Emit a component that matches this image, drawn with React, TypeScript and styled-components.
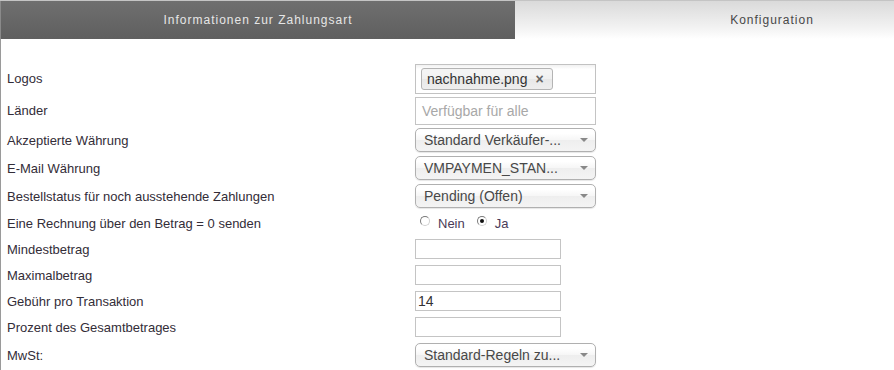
import React from 'react'
import styled, { createGlobalStyle } from 'styled-components'

const GlobalStyle = createGlobalStyle`
  html, body {
    margin: 0;
    padding: 0;
    background: #fff;
    overflow: hidden;
  }
  body {
    font-family: "Liberation Sans", Arial, sans-serif;
    color: #333;
  }
`

const Page = styled.div`
  width: 894px;
  height: 370px;
  overflow: hidden;
`

const TabBar = styled.div`
  display: flex;
  width: 1028px;
  height: 39px;
  box-sizing: border-box;
  border-top: 1px solid #c4c4c4;
`

const Tab = styled.div<{ $active?: boolean }>`
  flex: 0 0 514px;
  display: flex;
  align-items: center;
  justify-content: center;
  font-size: 12px;
  letter-spacing: 1px;
  color: ${({ $active }) => ($active ? '#e6e6e6' : '#484848')};
  background: ${({ $active }) =>
    $active
      ? 'linear-gradient(#6f6f6f, #5f5f5f)'
      : 'linear-gradient(#dadada, #f2f2f2 70%, #ffffff)'};
  border-left: ${({ $active }) => ($active ? '1px solid #8a8a8a' : 'none')};
`

const Panel = styled.div`
  border-left: 1px solid #9a9a9a;
  padding: 23px 0 0 6px;
  height: 331px;
  box-sizing: border-box;
`

const Row = styled.div<{ $h: number }>`
  display: grid;
  grid-template-columns: 408px auto;
  align-items: center;
  height: ${({ $h }) => $h}px;
`

const Label = styled.div`
  font-size: 13px;
  color: #332d38;
`

const Field = styled.div`
  display: flex;
  align-items: center;
`

const MultiBox = styled.div`
  width: 181px;
  height: 30px;
  box-sizing: border-box;
  border: 1px solid #c2c2c2;
  background: linear-gradient(#f2f2f2 1%, #ffffff 15%);
  display: flex;
  align-items: center;
  padding-left: 5px;
`

const Chip = styled.span`
  display: inline-flex;
  align-items: center;
  height: 22px;
  box-sizing: border-box;
  padding: 0 8px 0 5px;
  border: 1px solid #b4b4b4;
  border-radius: 3px;
  background: linear-gradient(#f4f4f4 20%, #f0f0f0 50%, #e8e8e8 52%, #eeeeee 100%);
  font-size: 14px;
  color: #333;
  gap: 8px;
`

const ChipClose = styled.span`
  font-size: 14px;
  font-weight: bold;
  color: #666;
  line-height: 1;
`

const TextBox = styled.div<{ $w: number; $h: number; $muted?: boolean }>`
  width: ${({ $w }) => $w}px;
  height: ${({ $h }) => $h}px;
  box-sizing: border-box;
  border: 1px solid #c4c4c4;
  background: #fff;
  display: flex;
  align-items: center;
  padding-left: 6px;
  font-size: 14px;
  color: ${({ $muted }) => ($muted ? '#a8a8a8' : '#333')};
`

const SmallInput = styled(TextBox)`
  padding-left: 2px;
`

const Select = styled.div`
  width: 181px;
  height: 24px;
  box-sizing: border-box;
  border: 1px solid #b0b0b0;
  border-radius: 5px;
  background: linear-gradient(#ffffff 20%, #f6f6f6 50%, #eeeeee 52%, #f4f4f4 100%);
  box-shadow: 0 1px 1px rgba(0, 0, 0, 0.1);
  display: flex;
  align-items: center;
  justify-content: space-between;
  padding: 0 7px 0 8px;
  font-size: 14px;
  color: #484848;
`

const Arrow = styled.span`
  width: 0;
  height: 0;
  border-left: 4px solid transparent;
  border-right: 4px solid transparent;
  border-top: 4px solid #888;
`

const RadioGroup = styled.div`
  display: flex;
  align-items: center;
  padding-left: 5px;
  font-size: 13px;
  color: #4a3b57;
`

const RadioItem = styled.label`
  display: inline-flex;
  align-items: flex-start;
  margin-right: 12px;
  gap: 8px;
`

const RadioDot = styled.span<{ $checked?: boolean }>`
  width: 10px;
  height: 10px;
  box-sizing: border-box;
  border-radius: 50%;
  border: 1px solid #7a7a7a;
  border-right-color: #d0d0d0;
  border-bottom-color: #d0d0d0;
  background: #fff;
  position: relative;
  &::after {
    content: '';
    display: ${({ $checked }) => ($checked ? 'block' : 'none')};
    position: absolute;
    left: 2px;
    top: 2px;
    width: 4px;
    height: 4px;
    border-radius: 50%;
    background: #111;
  }
`

const SelectField = ({ value }: { value: string }) => (
  <Select>
    <span>{value}</span>
    <Arrow />
  </Select>
)

const App: React.FC = () => {
  return (
    <Page>
      <GlobalStyle />
      <TabBar>
        <Tab $active>Informationen zur Zahlungsart</Tab>
        <Tab>Konfiguration</Tab>
      </TabBar>
      <Panel>
        <Row $h={33}>
          <Label>Logos</Label>
          <Field>
            <MultiBox>
              <Chip>
                nachnahme.png
                <ChipClose>×</ChipClose>
              </Chip>
            </MultiBox>
          </Field>
        </Row>
        <Row $h={31}>
          <Label>Länder</Label>
          <Field>
            <TextBox $w={181} $h={28} $muted>Verfügbar für alle</TextBox>
          </Field>
        </Row>
        <Row $h={28}>
          <Label>Akzeptierte Währung</Label>
          <Field>
            <SelectField value="Standard Verkäufer-..." />
          </Field>
        </Row>
        <Row $h={28}>
          <Label>E-Mail Währung</Label>
          <Field>
            <SelectField value="VMPAYMEN_STAN..." />
          </Field>
        </Row>
        <Row $h={28}>
          <Label>Bestellstatus für noch ausstehende Zahlungen</Label>
          <Field>
            <SelectField value="Pending (Offen)" />
          </Field>
        </Row>
        <Row $h={26}>
          <Label>Eine Rechnung über den Betrag = 0 senden</Label>
          <RadioGroup>
            <RadioItem>
              <RadioDot />
              Nein
            </RadioItem>
            <RadioItem>
              <RadioDot $checked />
              Ja
            </RadioItem>
          </RadioGroup>
        </Row>
        <Row $h={26}>
          <Label>Mindestbetrag</Label>
          <Field>
            <SmallInput $w={146} $h={20} />
          </Field>
        </Row>
        <Row $h={26}>
          <Label>Maximalbetrag</Label>
          <Field>
            <SmallInput $w={146} $h={20} />
          </Field>
        </Row>
        <Row $h={26}>
          <Label>Gebühr pro Transaktion</Label>
          <Field>
            <SmallInput $w={146} $h={20}>14</SmallInput>
          </Field>
        </Row>
        <Row $h={26}>
          <Label>Prozent des Gesamtbetrages</Label>
          <Field>
            <SmallInput $w={146} $h={20} />
          </Field>
        </Row>
        <Row $h={30}>
          <Label>MwSt:</Label>
          <Field>
            <SelectField value="Standard-Regeln zu..." />
          </Field>
        </Row>
      </Panel>
    </Page>
  )
}

export default App
